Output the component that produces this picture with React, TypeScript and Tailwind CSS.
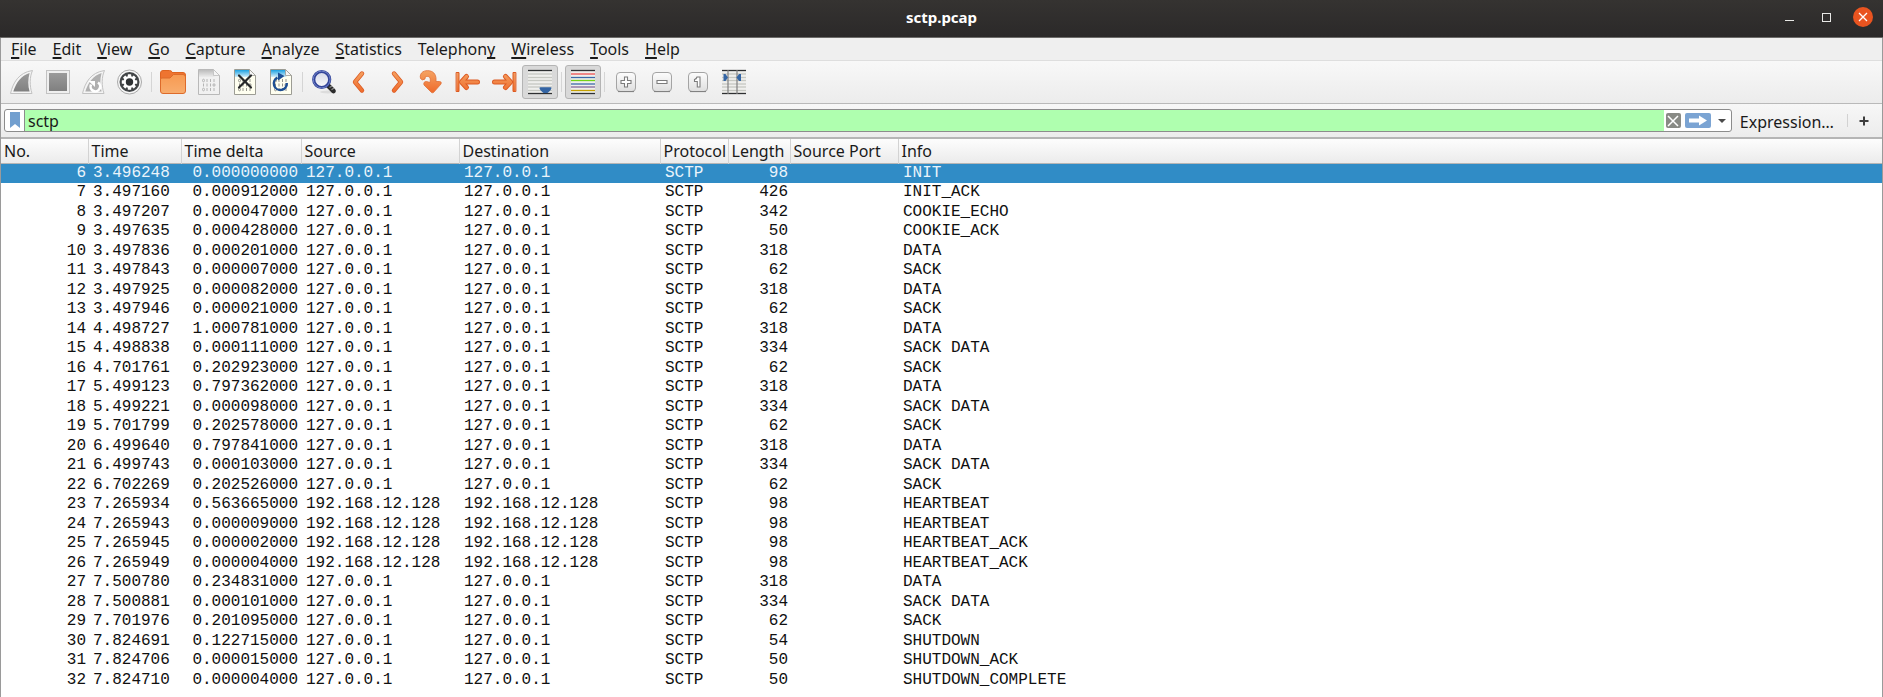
import React from "react";

type Packet = [number, string, string, string, string, number, string];

const LO = "127.0.0.1";
const LAN = "192.168.12.128";

const packets: Packet[] = [
  [6, "3.496248", "0.000000000", LO, LO, 98, "INIT"],
  [7, "3.497160", "0.000912000", LO, LO, 426, "INIT_ACK"],
  [8, "3.497207", "0.000047000", LO, LO, 342, "COOKIE_ECHO"],
  [9, "3.497635", "0.000428000", LO, LO, 50, "COOKIE_ACK"],
  [10, "3.497836", "0.000201000", LO, LO, 318, "DATA"],
  [11, "3.497843", "0.000007000", LO, LO, 62, "SACK"],
  [12, "3.497925", "0.000082000", LO, LO, 318, "DATA"],
  [13, "3.497946", "0.000021000", LO, LO, 62, "SACK"],
  [14, "4.498727", "1.000781000", LO, LO, 318, "DATA"],
  [15, "4.498838", "0.000111000", LO, LO, 334, "SACK DATA"],
  [16, "4.701761", "0.202923000", LO, LO, 62, "SACK"],
  [17, "5.499123", "0.797362000", LO, LO, 318, "DATA"],
  [18, "5.499221", "0.000098000", LO, LO, 334, "SACK DATA"],
  [19, "5.701799", "0.202578000", LO, LO, 62, "SACK"],
  [20, "6.499640", "0.797841000", LO, LO, 318, "DATA"],
  [21, "6.499743", "0.000103000", LO, LO, 334, "SACK DATA"],
  [22, "6.702269", "0.202526000", LO, LO, 62, "SACK"],
  [23, "7.265934", "0.563665000", LAN, LAN, 98, "HEARTBEAT"],
  [24, "7.265943", "0.000009000", LAN, LAN, 98, "HEARTBEAT"],
  [25, "7.265945", "0.000002000", LAN, LAN, 98, "HEARTBEAT_ACK"],
  [26, "7.265949", "0.000004000", LAN, LAN, 98, "HEARTBEAT_ACK"],
  [27, "7.500780", "0.234831000", LO, LO, 318, "DATA"],
  [28, "7.500881", "0.000101000", LO, LO, 334, "SACK DATA"],
  [29, "7.701976", "0.201095000", LO, LO, 62, "SACK"],
  [30, "7.824691", "0.122715000", LO, LO, 54, "SHUTDOWN"],
  [31, "7.824706", "0.000015000", LO, LO, 50, "SHUTDOWN_ACK"],
  [32, "7.824710", "0.000004000", LO, LO, 50, "SHUTDOWN_COMPLETE"],
];

// Label and the index of its mnemonic letter.
const menus: [string, number][] = [
  ["File", 0],
  ["Edit", 0],
  ["View", 0],
  ["Go", 0],
  ["Capture", 0],
  ["Analyze", 0],
  ["Statistics", 0],
  ["Telephony", 8],
  ["Wireless", 0],
  ["Tools", 0],
  ["Help", 0],
];

const columns: [string, string][] = [
  ["No.", "w-[87px]"],
  ["Time", "w-[93px]"],
  ["Time delta", "w-[120px]"],
  ["Source", "w-[158px]"],
  ["Destination", "w-[201px]"],
  ["Protocol", "w-[68px]"],
  ["Length", "w-[62px]"],
  ["Source Port", "w-[108px]"],
  ["Info", ""],
];

function Icon({ children }: { children: React.ReactNode }) {
  return (
    <svg viewBox="0 0 26 26" className="block h-[26px] w-[26px] shrink-0" fill="none" aria-hidden="true">
      {children}
    </svg>
  );
}

const FIN = "M1.5 24.5C4 14 9.500 3.500 23.500 1.500C20.500 8 20.500 17 23 24.500Z";
const FIN_INNER = "M4.300 22.600C7 14 12 6.500 20.600 4C18.800 10 18.900 17 20.600 22.600Z";

function Fin({ restart = false }: { restart?: boolean }) {
  return (
    <Icon>
      <path d={FIN} fill="#f4f4f4" stroke="#c2c2c2" />
      <path d={FIN_INNER} fill={restart ? "#b0b0b0" : "url(#grey)"} />
      {restart && (
        <>
          <path d="M10 15.500A4.800 4.800 0 1 0 17 13.500" stroke="#fff" strokeWidth="2.600" />
          <path d="M7.500 12H14V18Z" fill="#fff" />
        </>
      )}
    </Icon>
  );
}

function Doc({ kind }: { kind: "save" | "close" | "reload" }) {
  const off = kind === "save";
  return (
    <Icon>
      <path d="M2.500 .5H17.500L23.500 6.500V25.500H2.500Z" fill={off ? "#f1f1f1" : "#fffff0"} stroke={off ? "#b9b9b9" : "#9c9c94"} />
      <path d="M3 1H17.300L18.500 8H3Z" fill={off ? "url(#ash)" : "url(#sky)"} />
      <path d="M17.500 .5V6.500H23.500Z" fill="#f5f5f5" stroke={off ? "#bdbdbd" : "#9c9c94"} strokeWidth=".8" />
      <g stroke={off ? "#b4b4b4" : "#93938b"} strokeWidth="1">
        {[10, 14.5, 19].map((y, i) => (
          <g key={y}>
            <ellipse cx={i === 1 ? 18 : 7.5} cy={y + 1.5} rx="1" ry="1.300" />
            <path d={`M${i === 1 ? 7.5 : 11} ${y}v3M${i === 1 ? 11 : 14.5} ${y}v3M${i === 1 ? 14.5 : 18} ${y}v3`} />
          </g>
        ))}
      </g>
      {kind === "close" && <path d="M7 6.500L19 18.500M19 6.500L7 18.500" stroke="#26282a" strokeWidth="2.200" strokeLinecap="round" />}
      {kind === "reload" && (
        <>
          <path d="M9.500 8.600A6.500 6.500 0 1 0 18.800 14" stroke="#1d4f94" strokeWidth="2.400" />
          <path d="M10 3.500L16.500 7L10 11.500Z" fill="#1d4f94" />
        </>
      )}
    </Icon>
  );
}

function Chevron({ flip = false }: { flip?: boolean }) {
  return (
    <Icon>
      <g transform={flip ? "translate(26 0) scale(-1 1)" : undefined}>
        <path d="M15 4.500L8 13L15 21.500" stroke="#dc5a22" strokeWidth="4.400" strokeLinecap="round" strokeLinejoin="round" />
        <path d="M15 4.500L8 13L15 21.500" stroke="url(#orange)" strokeWidth="2.900" strokeLinecap="round" strokeLinejoin="round" />
      </g>
    </Icon>
  );
}

function EdgeArrow({ flip = false }: { flip?: boolean }) {
  const arrow = "M11.500 7.500L6.500 13L11.500 18.500M7 13H22.500";
  return (
    <Icon>
      <g transform={flip ? "translate(26 0) scale(-1 1)" : undefined} strokeLinecap="round" strokeLinejoin="round">
        <path d="M1.500 3.500H4V22.500H1.500Z" fill="url(#orange)" stroke="#dc5a22" />
        <path d={arrow} stroke="#dc5a22" strokeWidth="5" />
        <path d={arrow} stroke="url(#orange)" strokeWidth="3.200" />
      </g>
    </Icon>
  );
}

const LINE_Y = [1.5, 5, 8.5, 11.5, 15, 18, 21.5, 24.5];

function Lines({ colors }: { colors: string[] }) {
  return (
    <>
      <rect x="1" y="1" width="24" height="24" fill="#efefed" />
      {colors.map((c, i) => (
        <path key={i} d={`M1 ${LINE_Y[i]}H25`} stroke={c} strokeWidth="1.300" />
      ))}
    </>
  );
}

const G = "#c6c8c2";
const K = "#2e3032";

function ZoomKey({ children }: { children: React.ReactNode }) {
  return (
    <Icon>
      <rect x="3.500" y="3.500" width="19" height="19" rx="3.500" fill="url(#key)" stroke="#a4a4a4" />
      <path d="M5 22.600H21" stroke="#7d7d7d" />
      <g fill="#fff" stroke="#7c7c7c" strokeWidth="1.100">{children}</g>
    </Icon>
  );
}

const gearTeeth = [0, 45, 90, 135, 180, 225, 270, 315];

type Tool = { name: string; icon: React.ReactNode; pressed?: boolean; disabled?: boolean };

const groups: Tool[][] = [
  [
    { name: "Start capture", icon: <Fin />, disabled: true },
    {
      name: "Stop capture",
      disabled: true,
      icon: (
        <Icon>
          <rect x="1.500" y="1.500" width="23" height="23" fill="#efefef" stroke="#c2c2c2" />
          <rect x="4" y="4" width="18" height="18" fill="url(#grey)" />
        </Icon>
      ),
    },
    { name: "Restart capture", icon: <Fin restart />, disabled: true },
    {
      name: "Capture options",
      icon: (
        <Icon>
          <circle cx="12.500" cy="13" r="12" fill="#f6f6f6" stroke="#a9a9a9" />
          <circle cx="12.500" cy="13" r="10" fill="#424547" />
          <g fill="#fff">
            {gearTeeth.map((a) => (
              <rect key={a} x="10.800" y="5.300" width="3.400" height="4" rx=".5" transform={`rotate(${a} 12.500 13)`} />
            ))}
            <circle cx="12.500" cy="13" r="6" />
          </g>
          <circle cx="12.500" cy="13" r="3.700" fill="#2e3133" />
        </Icon>
      ),
    },
  ],
  [
    {
      name: "Open file",
      icon: (
        <Icon>
          <path d="M.5 4Q.5 1.500 3 1.500H9.500Q12 1.500 12 3.500H23Q25.500 3.500 25.500 6V12H.5Z" fill="#ee7430" stroke="#de6420" />
          <path d="M.5 10Q.5 9 2 9H10L13.500 5.500H23Q25.500 5.500 25.500 8V22Q25.500 24.500 23 24.500H3Q.5 24.500 .5 22Z" fill="url(#folder)" stroke="#dd6b2b" />
        </Icon>
      ),
    },
    { name: "Save file", icon: <Doc kind="save" />, disabled: true },
    { name: "Close file", icon: <Doc kind="close" /> },
    { name: "Reload file", icon: <Doc kind="reload" /> },
  ],
  [
    {
      name: "Find packet",
      icon: (
        <Icon>
          <ellipse cx="17" cy="23" rx="8" ry="1.500" fill="#000" opacity=".08" />
          <path d="M17 16.500L22.500 22" stroke="#2b2b2b" strokeWidth="4.600" strokeLinecap="round" />
          <path d="M18.500 18.500L21 17M20.500 20.800L23 19" stroke="#8d8d8d" strokeWidth="1.200" />
          <circle cx="10.700" cy="10.500" r="8" fill="url(#glass)" stroke="#32449a" strokeWidth="3.200" />
          <circle cx="10.700" cy="10.500" r="8.400" stroke="#7384c8" strokeWidth="1" />
        </Icon>
      ),
    },
    { name: "Previous packet", icon: <Chevron /> },
    { name: "Next packet", icon: <Chevron flip /> },
    {
      name: "Go to packet",
      icon: (
        <Icon>
          <path
            d="M1.500 9.500C0 3 6 1 10.500 1.800C15.500 2.800 17.500 6.500 17 12.500H20.500Q23 12.500 22 15L14.500 23.500Q13.500 24 12.500 23.500L5 16Q4 12.500 7.500 12.500L11 13.500C12 9 10.500 7 7.500 7.500Q5.500 8 6 10Q3 12 1.500 9.500Z"
            fill="url(#orange)"
            stroke="#e07038"
            strokeWidth=".8"
            strokeLinejoin="round"
          />
        </Icon>
      ),
    },
    { name: "First packet", icon: <EdgeArrow /> },
    { name: "Last packet", icon: <EdgeArrow flip /> },
    {
      name: "Auto scroll",
      pressed: true,
      icon: (
        <Icon>
          <Lines colors={[K, G, G, G, G, G, G, K]} />
          <path d="M12.500 19Q12.500 18.300 13.500 18.300H23.500Q24.500 18.300 24.500 19Q24.500 21 20.500 24H16.500Q12.500 21 12.500 19Z" fill="#3465a4" />
        </Icon>
      ),
    },
  ],
  [
    {
      name: "Colorize packets",
      pressed: true,
      icon: (
        <Icon>
          <Lines colors={[K, "#ef5050", "#3b6aa8", "#73d216", "#3b6aa8", "#86689a", "#c4a000", K]} />
        </Icon>
      ),
    },
  ],
  [
    {
      name: "Zoom in",
      icon: (
        <ZoomKey>
          <path d="M11.500 8H14.500V11.500H18V14.500H14.500V18H11.500V14.500H8V11.500H11.500Z" />
        </ZoomKey>
      ),
    },
    {
      name: "Zoom out",
      icon: (
        <ZoomKey>
          <path d="M8 11.500H18V14.500H8Z" />
        </ZoomKey>
      ),
    },
    {
      name: "Normal size",
      icon: (
        <ZoomKey>
          <path d="M12 8H15V18H12.300V12.500H9.500V10.500Q11.500 10 12 8Z" />
        </ZoomKey>
      ),
    },
    {
      name: "Resize columns",
      icon: (
        <Icon>
          <Lines colors={[K, G, G, G, G, G, G, K]} />
          <path d="M7 1V25M16 1V25" stroke="#808080" strokeWidth="1.200" />
          <path d="M2.500 5L4.500 5L7 8.500L4.500 12H2.500ZM20 5H18L15.500 8.500L18 12H20Z" fill="#3465a4" />
        </Icon>
      ),
    },
  ],
];

function Gradients() {
  const vertical = { x1: "0", y1: "0", x2: "0", y2: "1" };
  return (
    <svg className="absolute h-0 w-0" aria-hidden="true">
      <defs>
        <linearGradient id="grey" {...vertical}>
          <stop stopColor="#9b9b9b" />
          <stop offset="1" stopColor="#808080" />
        </linearGradient>
        <linearGradient id="sky" {...vertical}>
          <stop stopColor="#1ba1e2" />
          <stop offset="1" stopColor="#d5effa" />
        </linearGradient>
        <linearGradient id="ash" {...vertical}>
          <stop stopColor="#bcbcbc" />
          <stop offset="1" stopColor="#ececec" />
        </linearGradient>
        <linearGradient id="orange" x1="0" y1="0" x2="0" y2="26" gradientUnits="userSpaceOnUse">
          <stop stopColor="#f5a868" />
          <stop offset="1" stopColor="#ee6425" />
        </linearGradient>
        <linearGradient id="folder" {...vertical}>
          <stop stopColor="#f79a52" />
          <stop offset="1" stopColor="#f8ad6e" />
        </linearGradient>
        <linearGradient id="glass" {...vertical}>
          <stop stopColor="#d3d7e6" />
          <stop offset="1" stopColor="#fafafd" />
        </linearGradient>
        <linearGradient id="key" {...vertical}>
          <stop stopColor="#fdfdfd" />
          <stop offset="1" stopColor="#dedede" />
        </linearGradient>
      </defs>
    </svg>
  );
}

function TitleBar() {
  return (
    <header className="grid h-[38px] grid-cols-[1fr_auto_1fr] items-center border-b border-[#6c6b69] bg-linear-to-b from-[#353331] to-[#2b2929] pb-[3px]">
      <h1 className="col-start-2 text-[15px] leading-5 font-bold text-white">sctp.pcap</h1>
      <div className="flex items-center justify-end gap-[17px] pr-[10px]">
        <button type="button" aria-label="Minimize" className="flex h-5 w-5 items-center justify-center">
          <span className="mt-[6px] h-px w-[9px] bg-[#e8e8e6]" />
        </button>
        <button type="button" aria-label="Maximize" className="flex h-5 w-5 items-center justify-center">
          <span className="h-[9px] w-[9px] border border-[#e8e8e6]" />
        </button>
        <button type="button" aria-label="Close" className="flex h-5 w-5 items-center justify-center rounded-full bg-[#e95420]">
          <svg viewBox="0 0 10 10" className="h-[10px] w-[10px]" stroke="#fff" strokeWidth="1.300" aria-hidden="true">
            <path d="M1 1L9 9M9 1L1 9" />
          </svg>
        </button>
      </div>
    </header>
  );
}

function MenuBar() {
  return (
    <nav className="flex h-[23px] items-center gap-4 border-b border-[#dedede] bg-[#efefef] pl-[10px] text-[16px] leading-5">
      {menus.map(([label, i]) => (
        <button key={label} type="button">
          {label.slice(0, i)}
          <span className="underline decoration-2 underline-offset-2 [text-decoration-skip-ink:none]">{label[i]}</span>
          {label.slice(i + 1)}
        </button>
      ))}
    </nav>
  );
}

function ToolBar() {
  return (
    <div role="toolbar" aria-label="Main" className="flex h-[43px] items-center border-b border-[#b9b9b9] bg-linear-to-b from-[#f8f8f8] to-[#ececec] pl-[3px]">
      {groups.map((group, g) => (
        <React.Fragment key={g}>
          {g > 0 && <span className="mx-[3px] h-5 w-px bg-[#d5d5d5]" />}
          {group.map((t) => (
            <button
              key={t.name}
              type="button"
              aria-label={t.name}
              aria-pressed={t.pressed}
              disabled={t.disabled}
              className={
                t.pressed
                  ? "flex h-[34px] w-9 items-center justify-center rounded-[3px] border border-[#b4b4b4] bg-[#d9d9d9]"
                  : "flex h-[34px] w-9 items-center justify-center"
              }
            >
              {t.icon}
            </button>
          ))}
        </React.Fragment>
      ))}
    </div>
  );
}

function FilterBar() {
  return (
    <div className="flex h-[35px] items-center border-b-2 border-[#b5b5b5] bg-linear-to-b from-[#f7f7f7] to-[#ececec] pl-[3px]">
      <div className="flex h-[23px] min-w-0 flex-1 items-stretch overflow-hidden rounded-[3px] border border-[#8c8c8c] bg-white">
        <button type="button" aria-label="Filter bookmarks" className="flex w-5 items-start justify-center border-r border-[#8c8c8c] pt-[2px]">
          <svg viewBox="0 0 10 16" className="h-4 w-[10px]" aria-hidden="true">
            <path d="M0 0H10V16L5 12L0 16Z" fill="#729fcf" />
          </svg>
        </button>
        <input
          type="text"
          aria-label="Display filter"
          defaultValue="sctp"
          className="min-w-0 flex-1 bg-[#afffaf] px-[3px] text-[16px] leading-5 text-[#1a1a1a] outline-none"
        />
        <div className="flex items-center pl-[2px]">
          <button type="button" aria-label="Clear filter" className="flex h-[15px] w-[15px] items-center justify-center rounded-[2px] bg-[#888a85]">
            <svg viewBox="0 0 12 12" className="h-3 w-3" stroke="#fff" strokeWidth="1.500" aria-hidden="true">
              <path d="M1 1L11 11M11 1L1 11" />
            </svg>
          </button>
          <button type="button" aria-label="Apply filter" className="ml-[4px] flex h-[15px] w-[26px] items-center justify-center rounded-[2px] bg-[#7ba4d3]">
            <svg viewBox="0 0 18 11" className="h-[11px] w-[18px]" fill="#fff" aria-hidden="true">
              <path d="M0 3.500H10V.5L18 5.500L10 10.500V7.500H0Z" />
            </svg>
          </button>
          <button type="button" aria-label="Recent filters" className="flex h-5 w-[20px] items-center justify-center pl-[3px]">
            <svg viewBox="0 0 8 4" className="h-1 w-2" aria-hidden="true">
              <path d="M0 0H8L4 4Z" fill="#4a4a4a" />
            </svg>
          </button>
        </div>
      </div>
      <button type="button" className="mt-[2px] px-[8px] text-[16px] leading-5">
        Expression…
      </button>
      <span className="ml-[5px] h-[13px] w-px bg-[#d2d2d2]" />
      <button type="button" aria-label="Add filter button" className="flex h-5 w-[34px] items-center justify-center pr-[2px]">
        <svg viewBox="0 0 10 10" className="h-[10px] w-[10px]" stroke="#3d3d3d" strokeWidth="2" aria-hidden="true">
          <path d="M5 .5V9.500M.5 5H9.500" />
        </svg>
      </button>
    </div>
  );
}

function PacketList() {
  return (
    <table className="w-full table-fixed border-collapse text-left">
      <colgroup>
        {columns.map(([name, width]) => (
          <col key={name} className={width} />
        ))}
      </colgroup>
      <thead className="bg-linear-to-b from-[#fdfdfd] to-[#ebebeb] text-[16px] leading-5">
        <tr className="h-6 border-b border-[#b5b5b5]">
          {columns.map(([name]) => (
            <th key={name} scope="col" className="border-r border-[#d3d3d3] p-0 pt-px pl-[3px] font-normal whitespace-nowrap last:border-r-0">
              {name}
            </th>
          ))}
        </tr>
      </thead>
      <tbody className="font-['Liberation_Mono',monospace] text-[16px] leading-[19px] text-[#101010]">
        {packets.map(([no, time, delta, src, dst, len, info], i) => (
          <tr
            key={no}
            aria-selected={i === 0}
            className={i === 0 ? "h-5 bg-[#308cc6] text-[#eaf4fb]" : "odd:h-5 even:h-[19px]"}
          >
            <td className="p-0 pr-[2px] text-right">{no}</td>
            <td className="p-0 pl-[5px]">{time}</td>
            <td className="p-0 pr-[3px] text-right">{delta}</td>
            <td className="p-0 pl-[5px]">{src}</td>
            <td className="p-0 pl-[5px]">{dst}</td>
            <td className="p-0 pl-[5px]">SCTP</td>
            <td className="p-0 pr-[2px] text-right">{len}</td>
            <td className="p-0" />
            <td className="p-0 pl-[5px]">{info}</td>
          </tr>
        ))}
      </tbody>
    </table>
  );
}

export default function App() {
  return (
    <div className="flex min-h-screen flex-col bg-white font-['Noto_Sans','Open_Sans',sans-serif] text-[#1a1a1a]">
      <Gradients />
      <TitleBar />
      <main className="flex-1 border-x border-[#9a9a9a]">
        <MenuBar />
        <ToolBar />
        <FilterBar />
        <PacketList />
      </main>
    </div>
  );
}
